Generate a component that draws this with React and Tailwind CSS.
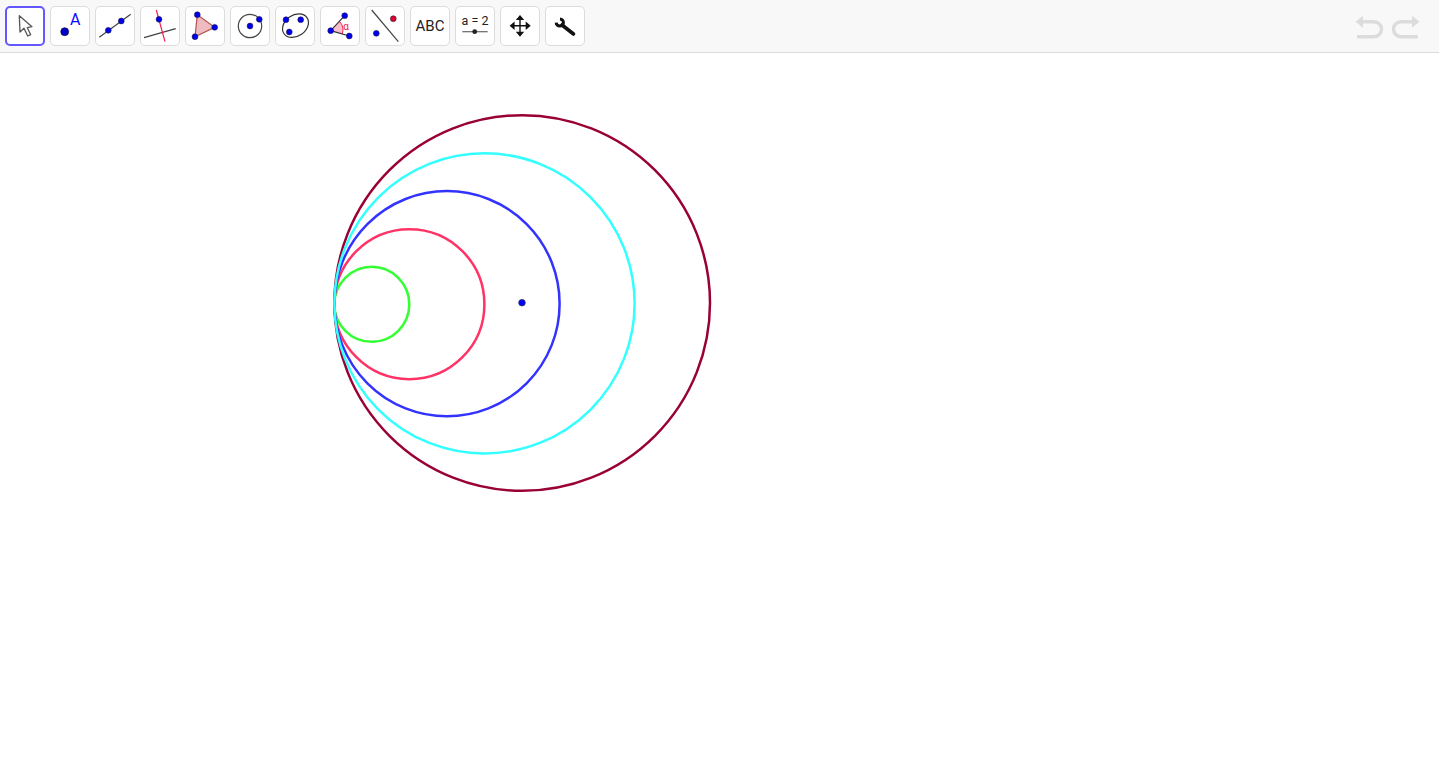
// GeoGebra-style toolbar with a construction of nested circles

function Pt({ x, y, r = 2.9, fill = "#0000ee" }) {
  return <circle cx={x} cy={y} r={r} fill={fill} stroke="#1a1a4d" strokeWidth="0.6" />;
}

function Tool({ active, children }) {
  return (
    <button
      className={
        active
          ? "flex h-10 w-10 shrink-0 items-center justify-center rounded-[5px] border-2 border-[#6557ff] bg-white"
          : "flex h-10 w-10 shrink-0 items-center justify-center rounded-[5px] border border-[#dcdcdc] bg-white"
      }
    >
      {children}
    </button>
  );
}

function Icon({ children }) {
  return (
    <svg className="shrink-0" width="40" height="40" viewBox="0 0 40 40" fill="none">
      {children}
    </svg>
  );
}

export default function App() {
  return (
    <div className="h-[763px] w-full overflow-hidden bg-white">
      {/* Toolbar */}
      <div className="flex h-[53px] w-[1439px] items-center justify-between border-b border-[#dcdcdc] bg-[#f8f8f8] pl-[5px] pr-[18px]">
        <div className="flex gap-[5px]">
          {/* Move */}
          <Tool active>
            <Icon>
              <path
                d="M14.3 9.7L15 26l4-3.7 3.7 7.7 3-1.3-3.4-7 4.7-1z"
                fill="#fff"
                stroke="#555"
                strokeWidth="1.3"
                strokeLinejoin="round"
              />
            </Icon>
          </Tool>
          {/* Point */}
          <Tool>
            <Icon>
              <circle cx="14.7" cy="25.7" r="4" fill="#0000c8" stroke="#111" strokeWidth="0.6" />
              <text x="20" y="19.3" fontSize="16" fill="#0a0aff" fontFamily="Roboto, Arial, sans-serif">
                A
              </text>
            </Icon>
          </Tool>
          {/* Line */}
          <Tool>
            <Icon>
              <path d="M4.3 31.3L35.7 8.3" stroke="#444" strokeWidth="1.2" />
              <Pt x={13.3} y={24.3} />
              <Pt x={26.3} y={15} />
            </Icon>
          </Tool>
          {/* Perpendicular */}
          <Tool>
            <Icon>
              <path d="M4 31.7L35.7 22.7" stroke="#444" strokeWidth="1.2" />
              <path d="M16.3 4L25 35.7" stroke="#f02050" strokeWidth="1.2" />
              <Pt x={19} y={13.3} />
            </Icon>
          </Tool>
          {/* Polygon */}
          <Tool>
            <Icon>
              <path d="M12.3 8.7L29.7 21.3 10 30.7z" fill="#eebcc0" stroke="#b0554f" strokeWidth="1.2" />
              <Pt x={12.3} y={8.7} />
              <Pt x={29.7} y={21.3} />
              <Pt x={10} y={30.7} />
            </Icon>
          </Tool>
          {/* Circle */}
          <Tool>
            <Icon>
              <circle cx="20" cy="20" r="11.7" stroke="#444" strokeWidth="1.2" />
              <Pt x={20} y={20} />
              <Pt x={29.3} y={13.3} />
            </Icon>
          </Tool>
          {/* Conic */}
          <Tool>
            <Icon>
              <ellipse cx="20.5" cy="19.7" rx="14" ry="10.5" transform="rotate(-35 20.5 19.7)" stroke="#333" strokeWidth="1.2" />
              <Pt x={11} y={13.7} />
              <Pt x={25.7} y={13.7} />
              <Pt x={14.3} y={26} />
            </Icon>
          </Tool>
          {/* Angle */}
          <Tool>
            <Icon>
              <path d="M10.7 24.7L19.5 15.5a12 12 0 0 1 2.7 12.4z" fill="#f7c0cb" />
              <path d="M19.5 15.5a12 12 0 0 1 2.7 12.4" stroke="#f02050" strokeWidth="1" />
              <path d="M24.7 9.7L10.7 24.7 29.3 30" stroke="#333" strokeWidth="1.2" />
              <Pt x={10.7} y={24.7} />
              <Pt x={24.7} y={9.7} />
              <Pt x={29.3} y={30} />
              <text x="23.2" y="23.5" fontSize="10" fill="#f02050" fontFamily="Roboto, Arial, sans-serif">
                α
              </text>
            </Icon>
          </Tool>
          {/* Reflect */}
          <Tool>
            <Icon>
              <path d="M6.7 4L33.3 35.7" stroke="#444" strokeWidth="1.2" />
              <Pt x={28.3} y={12.7} fill="#e60026" />
              <Pt x={11.3} y={27.3} />
            </Icon>
          </Tool>
          {/* Text */}
          <Tool>
            <span className="font-['Roboto',Arial,sans-serif] text-[15px] leading-none text-[#222222]">ABC</span>
          </Tool>
          {/* Slider */}
          <Tool>
            <Icon>
              <text
                x="20"
                y="19"
                textAnchor="middle"
                fontSize="12.5"
                fill="#222"
                fontFamily="Roboto, Arial, sans-serif"
              >
                a = 2
              </text>
              <path d="M7.3 25.7H32.7" stroke="#666" strokeWidth="1.2" />
              <circle cx="19.7" cy="25.7" r="2.4" fill="#222" />
            </Icon>
          </Tool>
          {/* Move view */}
          <Tool>
            <Icon>
              <path d="M20 13V27M13 19.8H27" stroke="#111" strokeWidth="1.4" />
              <path
                d="M20 9l4.2 5h-8.4zM20 30.7l4.2-5h-8.4zM9.6 19.8l5-4.2v8.4zM30.7 19.8l-5-4.2v8.4z"
                fill="#111"
              />
            </Icon>
          </Tool>
          {/* Settings */}
          <Tool>
            <Icon>
              <path d="M17 19L28.5 28" stroke="#111" strokeWidth="3.6" strokeLinecap="round" />
              <path d="M15 12.9A3.6 3.6 0 1 1 11.2 16.6" stroke="#111" strokeWidth="3" />
            </Icon>
          </Tool>
        </div>

        {/* Undo / redo */}
        <div className="mt-[4px] flex gap-[7px]">
          <svg width="30" height="30" viewBox="0 0 30 30" fill="none">
            <path d="M1.5 8.7L9 2.7v12z" fill="#dcdcdc" />
            <path d="M8 8.7h12a7.5 7.5 0 0 1 0 15H3" stroke="#dcdcdc" strokeWidth="3.4" />
          </svg>
          <svg width="30" height="30" viewBox="0 0 30 30" fill="none">
            <path d="M28.5 8.7L21 2.7v12z" fill="#dcdcdc" />
            <path d="M22 8.7H10a7.5 7.5 0 0 0 0 15h17" stroke="#dcdcdc" strokeWidth="3.4" />
          </svg>
        </div>
      </div>

      {/* Graphics view */}
      <svg className="block" width="1440" height="710" viewBox="0 53 1440 710" fill="none">
        <circle cx="522.2" cy="303" r="187.8" stroke="#990033" strokeWidth="2.5" />
        <circle cx="371.8" cy="304.3" r="37.5" stroke="#33ff33" strokeWidth="2.5" />
        <circle cx="409.4" cy="304.2" r="75" stroke="#ff3366" strokeWidth="2.5" />
        <circle cx="447" cy="303.7" r="112.6" stroke="#3333ff" strokeWidth="2.5" />
        <circle cx="484.5" cy="303.4" r="150.1" stroke="#33ffff" strokeWidth="2.5" />
        <circle cx="522" cy="302.7" r="3.3" fill="#0000ff" stroke="#333366" strokeWidth="0.8" />
      </svg>
    </div>
  );
}
